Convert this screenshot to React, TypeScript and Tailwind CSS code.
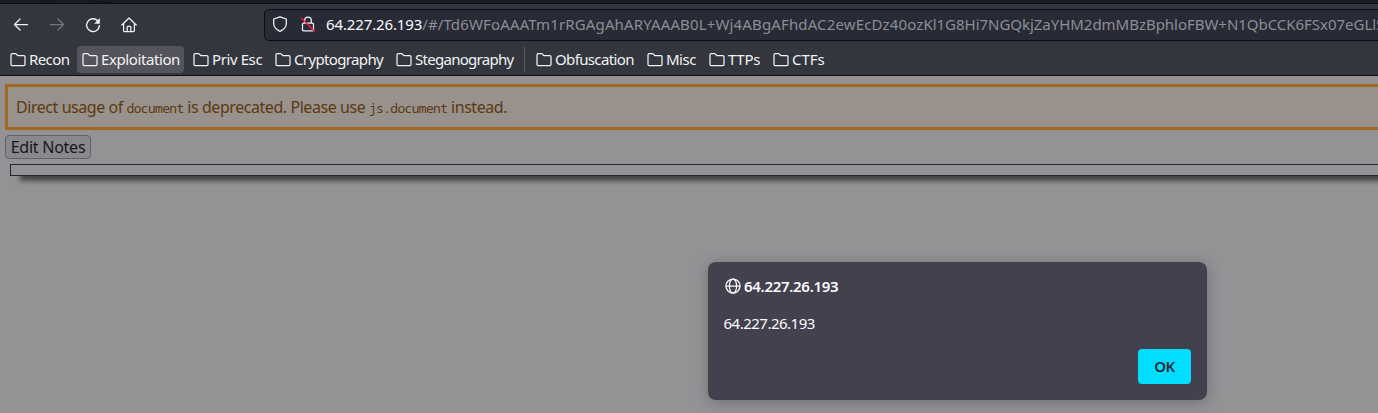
import type { ReactNode } from "react";

function Icon({ children, className = "" }: { children: ReactNode; className?: string }) {
  return (
    <svg viewBox="0 0 16 16" className={`h-4 w-4 shrink-0 fill-none stroke-current ${className}`} strokeWidth="1.25" strokeLinecap="round" strokeLinejoin="round">
      {children}
    </svg>
  );
}

function Folder() {
  return (
    <Icon>
      <path d="M2.200 1.600h3.600l2 1.900h6q1.200 0 1.200 1.200v7.800q0 1.200-1.200 1.200H2.200Q1 13.700 1 12.500V2.800q0-1.200 1.200-1.200Z" />
    </Icon>
  );
}

function Bookmark({ label, className }: { label: string; className: string }) {
  return (
    <div className={`flex h-[27px] shrink-0 items-center gap-[3px] rounded-[4px] pl-[5px] ${className}`}>
      <Folder />
      <span className="-mt-[2px] whitespace-nowrap">{label}</span>
    </div>
  );
}

function Code({ children }: { children: ReactNode }) {
  return <code className="font-['Noto_Sans_Mono','DejaVu_Sans_Mono',monospace] text-[13px] tracking-[-0.68px]">{children}</code>;
}

export default function App() {
  return (
    <div className="relative flex h-[413px] w-[1378px] flex-col overflow-hidden bg-[#949295] font-['Noto_Sans',sans-serif]">
      <div className="h-[3px] shrink-0 bg-[#1b1c22]">
        <svg viewBox="0 0 120 3" className="block h-[3px] w-[120px] fill-none stroke-[#101116]">
          <path d="M41 0l4 3M47 0l4 3M88 0l22 3" />
        </svg>
      </div>
      <header className="flex h-[73px] shrink-0 flex-col border-y border-[#0c0c13] bg-[#33363e] text-[#f2f2f2]">
        <nav className="flex h-[42px] shrink-0 items-center pl-[13px]">
          <div className="flex w-[251px] shrink-0 items-center gap-5">
            <Icon className="stroke-[#fbfbfe]"><path d="M14.500 7.500H1.500M7 2L1.500 7.500L7 13" /></Icon>
            <Icon className="text-[#74767c]"><path d="M1.500 7.500h13M9 2L14.500 7.500L9 13" /></Icon>
            <Icon>
              <path d="M12.600 3.700A6.400 6.400 0 1 0 14.400 8.600" strokeWidth="1.400" />
              <path d="M14.800 1v5.800H9.200Z" fill="currentColor" stroke="none" />
            </Icon>
            <Icon className="-ml-[0.5px]">
              <path d="M.8 8L8 1L15.200 8M2.600 6.600v7q0 1 1 1h8.800q1 0 1-1v-7M6.200 14.500v-4.300q0-.8.800-.8h2q.8 0 .8.800v4.300" />
            </Icon>
          </div>
          <div className="flex h-8 w-[1130px] shrink-0 items-center rounded-[5px] border border-[#0c0c13] bg-[#282a36] pl-[7px]">
            <Icon className="-mt-[2px]"><path d="M8 .8L14.300 3v4.300c0 3.800-2.300 6.400-6.300 8.100C4 13.700 1.700 11.100 1.700 7.300V3Z" /></Icon>
            <Icon className="-mt-[2px] ml-3">
              <path d="M4.700 7V4.500a3.300 3.300 0 0 1 6.600 0V7M3.500 7.200h9q1 0 1 1v5.600q0 1-1 1h-9q-1 0-1-1V8.200q0-1 1-1Z" />
              <path d="M1.500 2.200L14.500 15.200" className="stroke-[#ff1744]" />
            </Icon>
            <div className="-mt-[2px] ml-[10px] whitespace-nowrap text-[15px] leading-5 text-[#8d8e94]">
              <span className="tracking-[-0.13px] text-[#fbfbfe]">64.227.26.193</span>
              <span className="tracking-[0.14px]">/#/Td6WFoAAATm1rRGAgAhARYAAAB0L+Wj4ABgAFhdAC2ewEcDz40oz</span>
              <span className="tracking-[-0.03px]">Kl1G8Hi7NGQkjZaYHM2dmMBzBphloFBW+N1QbCCK6FSx07eGLl5</span>
            </div>
          </div>
        </nav>
        <div className="flex h-[27px] items-center pl-[5px] text-[15px] leading-5">
          <Bookmark label="Recon" className="w-[68px] tracking-[-0.6px]" />
          <Bookmark label="Exploitation" className="ml-1 w-[107px] bg-[#53545d] tracking-[-0.4px]" />
          <Bookmark label="Priv Esc" className="ml-1 w-[78px] tracking-[-0.4px]" />
          <Bookmark label="Cryptography" className="ml-1 w-[117px] tracking-[-0.64px]" />
          <Bookmark label="Steganography" className="ml-1 w-[127px] tracking-[-0.72px]" />
          <div className="ml-[6px] h-[25px] w-px bg-[#575960]" />
          <Bookmark label="Obfuscation" className="ml-[6px] w-[107px] tracking-[-0.64px]" />
          <Bookmark label="Misc" className="ml-1 w-[58px] tracking-[-0.5px]" />
          <Bookmark label="TTPs" className="ml-1 w-[60px] tracking-[-0.3px]" />
          <Bookmark label="CTFs" className="ml-1 w-[60px]" />
        </div>
      </header>
      <main className="flex flex-col items-start pl-[5px] pt-2 text-[16px]">
        <div className="flex h-[46px] w-[1390px] items-center whitespace-pre border-[3px] border-[#9f691e] bg-[#99918c] pl-2 leading-6 tracking-[-0.44px] text-[#593a12]">
          <span>Direct usage of <Code>document</Code> is deprecated. Please use <Code>js.document</Code> instead.</span>
        </div>
        <button className="mt-[5px] h-6 w-[86px] whitespace-nowrap rounded-[4px] border border-[#62626d] bg-[#88888f] text-[16px] leading-[22px] tracking-[-0.25px] text-[#17171a]">Edit Notes</button>
        <div className="ml-[5px] mt-[5px] h-3 w-[1390px] border border-[#25262a] shadow-[10px_5px_5px_#444547]" />
      </main>
      <section role="dialog" className="absolute left-[708px] top-[262px] flex h-[138px] w-[499px] flex-col rounded-[8px] bg-[#44414e] px-4 pt-[15px] text-[15px] text-[#fbfbfe] shadow-[0_2px_14px_rgba(58,57,68,0.4)]">
        <div className="flex h-[18px] items-center gap-[3.5px] font-semibold tracking-[-0.3px]">
          <Icon className="ml-[0.5px]">
            <circle cx="8" cy="8" r="7" />
            <ellipse cx="8" cy="8" rx="3.600" ry="7" />
            <path d="M1 8h14" />
          </Icon>
          <span>64.227.26.193</span>
        </div>
        <p className="-ml-[0.5px] mt-[18px] leading-5 tracking-[-0.5px]">64.227.26.193</p>
        <button className="mt-4 h-[35px] w-[53px] self-end rounded-[4px] bg-[#00ddff] font-semibold tracking-[-0.5px] text-[#2b2a33]">OK</button>
      </section>
    </div>
  );
}
